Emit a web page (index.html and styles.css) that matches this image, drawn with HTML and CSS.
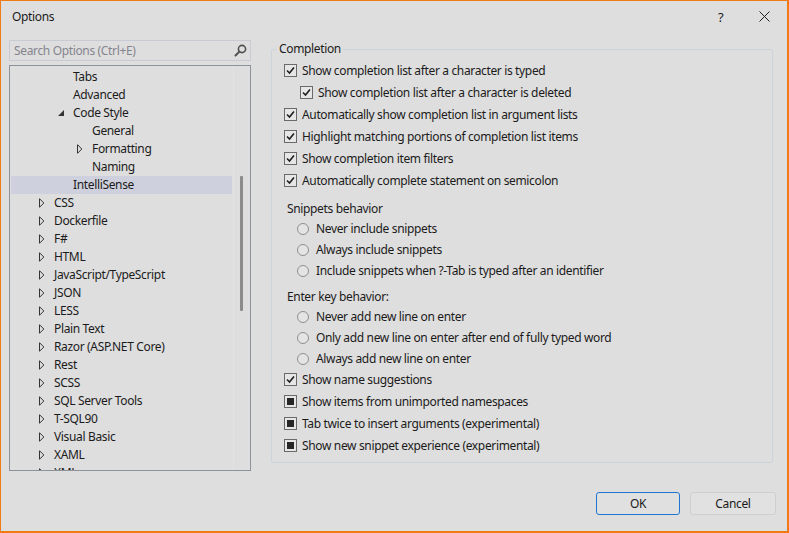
FILE: index.html
```html
<!DOCTYPE html>
<html>
<head>
<meta charset="utf-8">
<link rel="stylesheet" href="styles.css">
</head>
<body>
<div class="window">
  <div class="titlebar">
    <span class="title">Options</span>
    <span class="help">?</span>
    <span class="close"><svg width="11" height="11" viewBox="0 0 11 11"><path d="M0.5 0.5 L10.5 10.5 M10.5 0.5 L0.5 10.5" stroke="#1e1e1e" stroke-width="1" fill="none"/></svg></span>
  </div>
  <div class="main">
    <div class="left">
      <div class="search">
        <span class="placeholder">Search Options (Ctrl+E)</span>
        <svg class="mag" width="13" height="13" viewBox="0 0 13 13"><circle cx="8" cy="5" r="3.6" stroke="#505050" stroke-width="1.6" fill="none"/><path d="M5.4 7.6 L1.5 11.5" stroke="#505050" stroke-width="2" stroke-linecap="round"/></svg>
      </div>
      <div class="tree">
        <div class="rows">
          <div class="row l1"><span class="tw"></span>Tabs</div>
          <div class="row l1"><span class="tw"></span>Advanced</div>
          <div class="row l1"><span class="tw"><svg width="6" height="6" viewBox="0 0 6 6"><polygon points="6,0 6,6 0,6" fill="#333"/></svg></span>Code Style</div>
          <div class="row l2"><span class="tw"></span>General</div>
          <div class="row l2"><span class="tw"><svg width="6" height="10" viewBox="0 0 6 10"><polygon points="0.5,0.7 0.5,9.3 4.8,5" fill="none" stroke="#333" stroke-width="1"/></svg></span>Formatting</div>
          <div class="row l2"><span class="tw"></span>Naming</div>
          <div class="row l1 sel"><span class="tw"></span>IntelliSense</div>
          <div class="row l0"><span class="tw"><svg width="6" height="10" viewBox="0 0 6 10"><polygon points="0.5,0.7 0.5,9.3 4.8,5" fill="none" stroke="#333" stroke-width="1"/></svg></span>CSS</div>
          <div class="row l0"><span class="tw"><svg width="6" height="10" viewBox="0 0 6 10"><polygon points="0.5,0.7 0.5,9.3 4.8,5" fill="none" stroke="#333" stroke-width="1"/></svg></span>Dockerfile</div>
          <div class="row l0"><span class="tw"><svg width="6" height="10" viewBox="0 0 6 10"><polygon points="0.5,0.7 0.5,9.3 4.8,5" fill="none" stroke="#333" stroke-width="1"/></svg></span>F#</div>
          <div class="row l0"><span class="tw"><svg width="6" height="10" viewBox="0 0 6 10"><polygon points="0.5,0.7 0.5,9.3 4.8,5" fill="none" stroke="#333" stroke-width="1"/></svg></span>HTML</div>
          <div class="row l0"><span class="tw"><svg width="6" height="10" viewBox="0 0 6 10"><polygon points="0.5,0.7 0.5,9.3 4.8,5" fill="none" stroke="#333" stroke-width="1"/></svg></span>JavaScript/TypeScript</div>
          <div class="row l0"><span class="tw"><svg width="6" height="10" viewBox="0 0 6 10"><polygon points="0.5,0.7 0.5,9.3 4.8,5" fill="none" stroke="#333" stroke-width="1"/></svg></span>JSON</div>
          <div class="row l0"><span class="tw"><svg width="6" height="10" viewBox="0 0 6 10"><polygon points="0.5,0.7 0.5,9.3 4.8,5" fill="none" stroke="#333" stroke-width="1"/></svg></span>LESS</div>
          <div class="row l0"><span class="tw"><svg width="6" height="10" viewBox="0 0 6 10"><polygon points="0.5,0.7 0.5,9.3 4.8,5" fill="none" stroke="#333" stroke-width="1"/></svg></span>Plain Text</div>
          <div class="row l0"><span class="tw"><svg width="6" height="10" viewBox="0 0 6 10"><polygon points="0.5,0.7 0.5,9.3 4.8,5" fill="none" stroke="#333" stroke-width="1"/></svg></span>Razor (ASP.NET Core)</div>
          <div class="row l0"><span class="tw"><svg width="6" height="10" viewBox="0 0 6 10"><polygon points="0.5,0.7 0.5,9.3 4.8,5" fill="none" stroke="#333" stroke-width="1"/></svg></span>Rest</div>
          <div class="row l0"><span class="tw"><svg width="6" height="10" viewBox="0 0 6 10"><polygon points="0.5,0.7 0.5,9.3 4.8,5" fill="none" stroke="#333" stroke-width="1"/></svg></span>SCSS</div>
          <div class="row l0"><span class="tw"><svg width="6" height="10" viewBox="0 0 6 10"><polygon points="0.5,0.7 0.5,9.3 4.8,5" fill="none" stroke="#333" stroke-width="1"/></svg></span>SQL Server Tools</div>
          <div class="row l0"><span class="tw"><svg width="6" height="10" viewBox="0 0 6 10"><polygon points="0.5,0.7 0.5,9.3 4.8,5" fill="none" stroke="#333" stroke-width="1"/></svg></span>T-SQL90</div>
          <div class="row l0"><span class="tw"><svg width="6" height="10" viewBox="0 0 6 10"><polygon points="0.5,0.7 0.5,9.3 4.8,5" fill="none" stroke="#333" stroke-width="1"/></svg></span>Visual Basic</div>
          <div class="row l0"><span class="tw"><svg width="6" height="10" viewBox="0 0 6 10"><polygon points="0.5,0.7 0.5,9.3 4.8,5" fill="none" stroke="#333" stroke-width="1"/></svg></span>XAML</div>
          <div class="row l0"><span class="tw"><svg width="6" height="10" viewBox="0 0 6 10"><polygon points="0.5,0.7 0.5,9.3 4.8,5" fill="none" stroke="#333" stroke-width="1"/></svg></span>XML</div>
        </div>
        <div class="gutter"><div class="thumb"></div></div>
      </div>
    </div>
    <fieldset class="group">
      <legend>Completion</legend>
      <div class="opt"><span class="cb on"><svg width="11" height="11" viewBox="0 0 11 11"><polyline points="2,5.5 4.5,8 9,2.5" fill="none" stroke="#1e1e1e" stroke-width="1.6"/></svg></span>Show completion list after a character is typed</div>
      <div class="opt sub"><span class="cb on"><svg width="11" height="11" viewBox="0 0 11 11"><polyline points="2,5.5 4.5,8 9,2.5" fill="none" stroke="#1e1e1e" stroke-width="1.6"/></svg></span>Show completion list after a character is deleted</div>
      <div class="opt"><span class="cb on"><svg width="11" height="11" viewBox="0 0 11 11"><polyline points="2,5.5 4.5,8 9,2.5" fill="none" stroke="#1e1e1e" stroke-width="1.6"/></svg></span>Automatically show completion list in argument lists</div>
      <div class="opt"><span class="cb on"><svg width="11" height="11" viewBox="0 0 11 11"><polyline points="2,5.5 4.5,8 9,2.5" fill="none" stroke="#1e1e1e" stroke-width="1.6"/></svg></span>Highlight matching portions of completion list items</div>
      <div class="opt"><span class="cb on"><svg width="11" height="11" viewBox="0 0 11 11"><polyline points="2,5.5 4.5,8 9,2.5" fill="none" stroke="#1e1e1e" stroke-width="1.6"/></svg></span>Show completion item filters</div>
      <div class="opt"><span class="cb on"><svg width="11" height="11" viewBox="0 0 11 11"><polyline points="2,5.5 4.5,8 9,2.5" fill="none" stroke="#1e1e1e" stroke-width="1.6"/></svg></span>Automatically complete statement on semicolon</div>

      <div class="sect first">Snippets behavior</div>
      <div class="radio"><span class="rb"></span>Never include snippets</div>
      <div class="radio"><span class="rb"></span>Always include snippets</div>
      <div class="radio"><span class="rb"></span>Include snippets when ?-Tab is typed after an identifier</div>

      <div class="sect">Enter key behavior:</div>
      <div class="radio"><span class="rb"></span>Never add new line on enter</div>
      <div class="radio"><span class="rb"></span>Only add new line on enter after end of fully typed word</div>
      <div class="radio"><span class="rb"></span>Always add new line on enter</div>

      <div class="opt after"><span class="cb on"><svg width="11" height="11" viewBox="0 0 11 11"><polyline points="2,5.5 4.5,8 9,2.5" fill="none" stroke="#1e1e1e" stroke-width="1.6"/></svg></span>Show name suggestions</div>
      <div class="opt"><span class="cb ind"><span class="sq"></span></span>Show items from unimported namespaces</div>
      <div class="opt"><span class="cb ind"><span class="sq"></span></span>Tab twice to insert arguments (experimental)</div>
      <div class="opt"><span class="cb ind"><span class="sq"></span></span>Show new snippet experience (experimental)</div>
    </fieldset>
  </div>
  <div class="footer">
    <button class="btn primary">OK</button>
    <button class="btn">Cancel</button>
  </div>
</div>
</body>
</html>
```

FILE: styles.css
```css
html, body {
  margin: 0;
  padding: 0;
  background: #dedede;
}

body {
  font-family: "Noto Sans", "Open Sans", sans-serif;
  font-size: 12px;
  letter-spacing: -0.35px;
  color: #1b1b1b;
}

.window {
  width: 789px;
  height: 533px;
  box-sizing: border-box;
  border-style: solid;
  border-color: #ef7b16;
  border-width: 1px 2px 2px 1px;
  background: #dedede;
  display: flex;
  flex-direction: column;
}

.titlebar {
  height: 31px;
  display: flex;
  align-items: center;
  padding-left: 11px;
  flex: none;
}

.title {
  flex: 1;
  line-height: 16px;
  padding-top: 1px;
}

.help {
  width: 12px;
  margin-right: 29px;
  font-size: 13px;
}

.close {
  width: 11px;
  height: 11px;
  margin-right: 17px;
  display: flex;
}

.main {
  display: flex;
  padding: 8px 0 0 8px;
  gap: 20px;
  flex: none;
}

.left {
  width: 242px;
  display: flex;
  flex-direction: column;
  gap: 4px;
}

.search {
  height: 21px;
  box-sizing: border-box;
  border: 1px solid #c8cad6;
  display: flex;
  align-items: center;
  padding: 0 3px 0 4px;
}

.placeholder {
  flex: 1;
  color: #85858f;
}

.tree {
  height: 406px;
  box-sizing: border-box;
  border: 1px solid #8d9199;
  display: flex;
  overflow: hidden;
}

.rows {
  width: 223px;
  padding-top: 2px;
}

.row {
  height: 18px;
  line-height: 18px;
  display: flex;
  align-items: center;
  white-space: nowrap;
  margin: 0 1px;
}

.row.l0 { padding-left: 28px; }
.row.l1 { padding-left: 47px; }
.row.l2 { padding-left: 66px; }

.row.sel {
  background: #cfd0dd;
}

.tw {
  width: 15px;
  flex: none;
  display: flex;
  align-items: center;
}

.gutter {
  flex: 1;
  border-left: 1px solid #e3e3e3;
}

.thumb {
  width: 3px;
  height: 135px;
  margin: 110px 0 0 6px;
  background: #8c8c8c;
  border-radius: 1px;
}

.group {
  width: 502px;
  height: 423px;
  box-sizing: border-box;
  margin: 0;
  padding: 0;
  border: 1px solid #cbd3dc;
  border-radius: 3px;
  min-width: 0;
}

.group legend {
  margin-left: 5px;
  padding: 1px 2px 2px;
  line-height: 16px;
}

.opt {
  height: 22px;
  display: flex;
  align-items: center;
  padding-left: 12px;
  white-space: nowrap;
}

.opt.sub {
  padding-left: 28px;
}

.opt.after {
  height: 21px;
}

.cb {
  width: 13px;
  height: 13px;
  box-sizing: border-box;
  border: 1px solid #6a6a6a;
  background: #e6e6e6;
  margin-right: 5px;
  display: flex;
  align-items: center;
  justify-content: center;
  flex: none;
}

.cb .sq {
  width: 7px;
  height: 7px;
  background: #262626;
}

.sect {
  height: 18px;
  line-height: 18px;
  padding-left: 15px;
  margin-top: 7px;
}

.sect.first {
  margin-top: 9px;
}

.radio {
  height: 21px;
  display: flex;
  align-items: center;
  padding-left: 25px;
  white-space: nowrap;
}

.rb {
  width: 12px;
  height: 12px;
  box-sizing: border-box;
  border: 1px solid #8f8f8f;
  border-radius: 50%;
  background: #e4e4e4;
  margin-right: 7px;
  flex: none;
}

.footer {
  display: flex;
  justify-content: flex-end;
  gap: 10px;
  padding: 21px 11px 0 0;
}

.btn {
  font-family: "Noto Sans", "Open Sans", sans-serif;
  font-size: 12px;
  letter-spacing: -0.35px;
  color: #1b1b1b;
  height: 23px;
  width: 86px;
  box-sizing: border-box;
  background: #e1e1e1;
  border: 1px solid #cfcfcf;
  border-radius: 3px;
  padding: 0;
}

.btn.primary {
  width: 84px;
  border-color: #1f76d2;
  background: #e0e0e0;
}
```
